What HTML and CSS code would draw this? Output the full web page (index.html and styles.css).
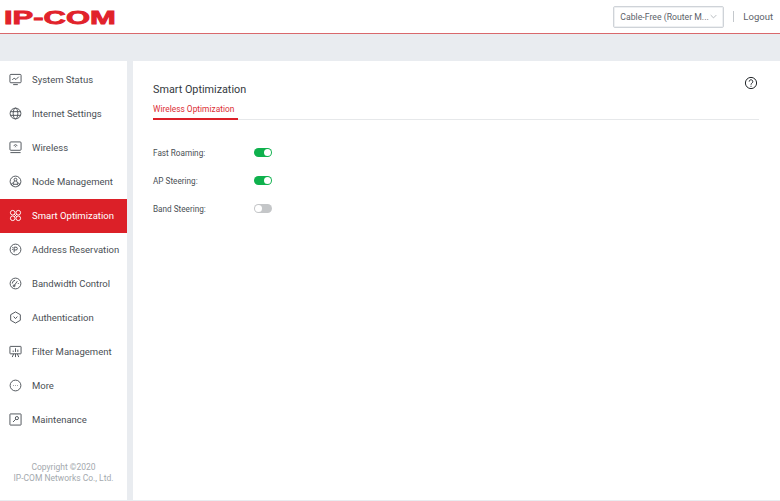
FILE: index.html
```html
<!DOCTYPE html>
<html lang="en">
<head>
    <meta charset="UTF-8">
    <title>Smart Optimization</title>
    <link rel="stylesheet" href="styles.css">
</head>
<body>
    <div class="top-bar">
        <div class="logo">IP-COM</div>
        <div class="top-right">
            <div class="mode-select">
                <span>Cable-Free (Router M...</span>
                <svg class="chevron" viewBox="0 0 10 6"><path d="M1 1l4 4 4-4"/></svg>
            </div>
            <div class="logout">Logout</div>
        </div>
    </div>

    <div class="layout">
        <div class="sidebar">
            <ul class="menu">
                <li>
                    <svg viewBox="0 0 14 14"><rect x="1" y="1.5" width="12" height="9" rx="1"/><path d="M3.5 7.5l2-2 2 1.5 3-3M4.5 12.5h5"/></svg>
                    System Status
                </li>
                <li>
                    <svg viewBox="0 0 14 14"><circle cx="7" cy="7" r="5.8"/><ellipse cx="7" cy="7" rx="2.5" ry="5.8"/><path d="M1.5 5h11M1.5 9h11"/></svg>
                    Internet Settings
                </li>
                <li>
                    <svg viewBox="0 0 14 14"><rect x="1" y="1" width="12" height="9" rx="1"/><path d="M5 5l2-1 2 1M6.3 6.5L7 6l.7.5M1.5 12.5h11"/></svg>
                    Wireless
                </li>
                <li>
                    <svg viewBox="0 0 14 14"><circle cx="7" cy="7" r="5.8"/><circle cx="7" cy="5" r="1.5"/><circle cx="3.8" cy="10" r="1.2"/><circle cx="10.2" cy="10" r="1.2"/><path d="M6 6.3l-1.5 2.7M8 6.3l1.5 2.7M5 10h4"/></svg>
                    Node Management
                </li>
                <li class="active">
                    <svg viewBox="0 0 14 14"><circle cx="4" cy="4" r="2.5"/><circle cx="10" cy="4" r="2.5"/><circle cx="4" cy="10" r="2.5"/><circle cx="10" cy="10" r="2.5"/><path d="M5.5 5.5l3 3M8.5 5.5l-3 3"/></svg>
                    Smart Optimization
                </li>
                <li>
                    <svg viewBox="0 0 14 14"><circle cx="7" cy="7" r="5.8"/><path d="M5.5 10V4.5h2a1.5 1.5 0 010 3h-2M3.5 5h1M3.5 7h1"/></svg>
                    Address Reservation
                </li>
                <li>
                    <svg viewBox="0 0 14 14"><circle cx="7" cy="7" r="5.8"/><path d="M5.5 9.5L9 4.5M3.5 7a3.5 3.5 0 013-3.4M10.5 7h-1"/><circle cx="5.5" cy="9.5" r="1"/></svg>
                    Bandwidth Control
                </li>
                <li>
                    <svg viewBox="0 0 14 14"><path d="M7 1l5.2 3v6L7 13l-5.2-3V4z"/><path d="M5 6l2 2.2L9 6"/></svg>
                    Authentication
                </li>
                <li>
                    <svg viewBox="0 0 14 14"><rect x="1" y="1.5" width="12" height="8" rx=".5"/><path d="M4.5 7.5V6M7 7.5V3.5M9.5 7.5V5M5 9.5l-1.5 3.5M9 9.5l1.5 3.5M7 9.5V13"/></svg>
                    Filter Management
                </li>
                <li>
                    <svg viewBox="0 0 14 14"><circle cx="7" cy="7" r="5.8"/><path d="M4.4 7h.6M6.7 7h.6M9 7h.6"/></svg>
                    More
                </li>
                <li>
                    <svg viewBox="0 0 14 14"><rect x="1" y="1" width="12" height="12" rx=".5"/><circle cx="8.5" cy="5.5" r="1.7"/><path d="M7.3 6.7l-3 3"/></svg>
                    Maintenance
                </li>
            </ul>
            <div class="copyright">Copyright ©2020<br>IP-COM Networks Co., Ltd.</div>
        </div>

        <div class="content">
            <svg class="help" viewBox="0 0 14 14"><circle cx="7" cy="7" r="5.6"/><path d="M5.2 5.6a1.8 1.8 0 113 1.3c-.7.6-1.2.9-1.2 1.8M7 9.8v1"/></svg>
            <h2>Smart Optimization</h2>
            <div class="tabs">
                <div class="tab">Wireless Optimization</div>
            </div>
            <div class="form-row">
                <label>Fast Roaming:</label>
                <div class="switch on"></div>
            </div>
            <div class="form-row">
                <label>AP Steering:</label>
                <div class="switch on"></div>
            </div>
            <div class="form-row">
                <label>Band Steering:</label>
                <div class="switch"></div>
            </div>
        </div>
    </div>
</body>
</html>
```

FILE: styles.css
```css
body {
    margin: 0;
    padding: 0;
    font-family: Roboto, Arial, sans-serif;
    background-color: #e9ecf0;
    color: #3a3f45;
    font-size: 9.5px;
    height: 100vh;
    overflow: hidden;
    display: flex;
    flex-direction: column;
}

.top-bar {
    height: 33px;
    background-color: white;
    border-bottom: 1px solid #d9686c;
    display: flex;
    align-items: center;
    justify-content: space-between;
    flex-shrink: 0;
}

.logo {
    margin-left: 4px;
    margin-top: 3px;
    width: 61px;
    font-family: "Liberation Sans", Arial, sans-serif;
    font-size: 18px;
    line-height: 18px;
    font-weight: bold;
    color: #e1222b;
    -webkit-text-stroke: 0.8px #e1222b;
    transform: scaleX(1.72);
    transform-origin: left center;
    white-space: nowrap;
}

.top-right {
    display: flex;
    align-items: center;
    margin-right: 7px;
}

.mode-select {
    width: 111px;
    height: 22px;
    box-sizing: border-box;
    border: 1px solid #cfd3d8;
    box-shadow: 0 0 0 1px #eef0f2 inset;
    border-radius: 2px;
    padding: 0 6px;
    display: flex;
    align-items: center;
    justify-content: space-between;
    color: #5c6269;
    font-size: 8.7px;
    white-space: nowrap;
}

.chevron {
    width: 7px;
    height: 5px;
    fill: none;
    stroke: #9aa0a6;
    stroke-width: 1;
}

.logout {
    margin-left: 9px;
    padding-left: 9px;
    border-left: 1px solid #c4c8cc;
    line-height: 11px;
    color: #5c6269;
}

.layout {
    flex-grow: 1;
    display: flex;
    gap: 6px;
    padding-top: 27px;
    padding-bottom: 1px;
    min-height: 0;
}

.sidebar {
    width: 127px;
    background-color: white;
    padding-top: 2px;
    display: flex;
    flex-direction: column;
    justify-content: space-between;
    flex-shrink: 0;
}

.menu {
    list-style-type: none;
    margin: 0;
    padding: 0;
}

.menu li {
    height: 34px;
    box-sizing: border-box;
    display: flex;
    align-items: center;
    padding-left: 9px;
    padding-bottom: 1px;
    gap: 10px;
    white-space: nowrap;
    color: #4a4f55;
}

.menu li svg {
    width: 13px;
    height: 13px;
    fill: none;
    stroke: #4a4f55;
    stroke-width: 1;
    flex-shrink: 0;
}

.menu li.active {
    background-color: #dc2028;
    color: white;
}

.menu li.active svg {
    stroke: white;
}

.copyright {
    text-align: center;
    font-size: 8.5px;
    line-height: 11px;
    color: #a4a9ae;
    padding-bottom: 16px;
}

.content {
    flex-grow: 1;
    background-color: white;
    padding: 21px 21px 0 20px;
    position: relative;
}

.help {
    position: absolute;
    top: 15px;
    right: 22px;
    width: 14px;
    height: 14px;
    fill: none;
    stroke: #23272b;
    stroke-width: 1;
}

.content h2 {
    margin: 0;
    font-size: 10.8px;
    font-weight: normal;
    line-height: 16px;
    color: #33383d;
}

.tabs {
    margin-top: 4px;
    border-bottom: 1px solid #e6e8ea;
    margin-bottom: 18px;
}

.tab {
    display: inline-block;
    color: #dc2f36;
    font-size: 8.4px;
    line-height: 15px;
    padding: 0 4px 1px 0;
    border-bottom: 2px solid #dc2028;
    margin-bottom: -1px;
    vertical-align: bottom;
}

.form-row {
    display: flex;
    align-items: center;
    height: 28px;
    font-size: 8.2px;
    color: #4a4f55;
}

.form-row label {
    width: 101px;
    padding-top: 2px;
}

.switch {
    width: 18px;
    height: 9px;
    border-radius: 5px;
    background-color: #c4c6c8;
    position: relative;
}

.switch::after {
    content: "";
    position: absolute;
    left: 1px;
    top: 1px;
    width: 7px;
    height: 7px;
    border-radius: 50%;
    background-color: white;
}

.switch.on {
    background-color: #0fb14d;
}

.switch.on::after {
    left: 10px;
}
```
